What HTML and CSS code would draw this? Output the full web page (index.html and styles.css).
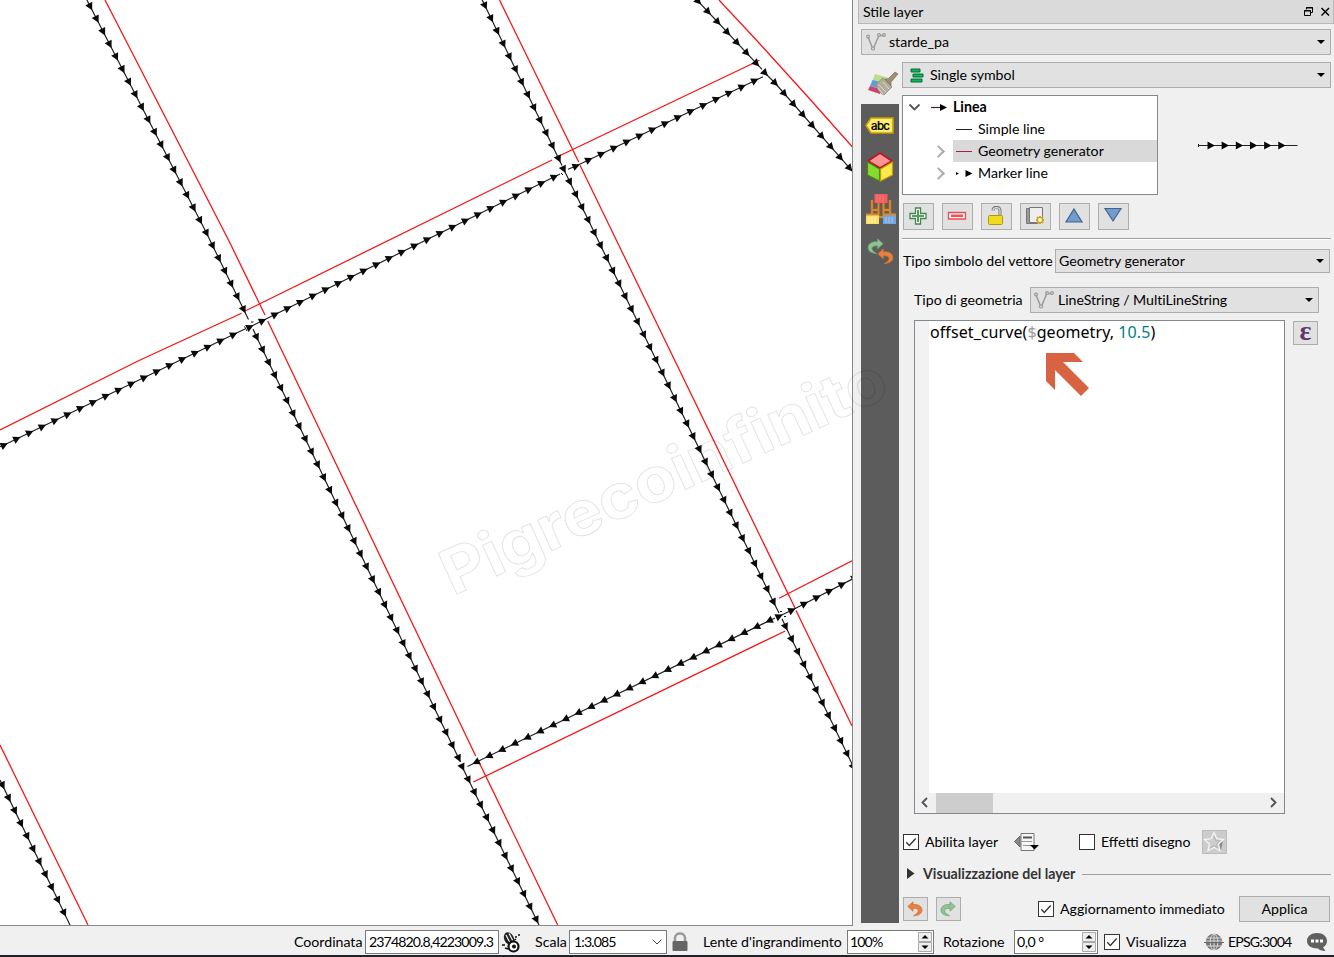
FILE: index.html
```html
<!DOCTYPE html>
<html lang="it">
<head>
<meta charset="utf-8">
<title>Stile layer</title>
<link rel="stylesheet" href="styles.css">
</head>
<body>
<svg class="defs" width="0" height="0">
  <defs>
    <symbol id="vline" viewBox="0 0 20 18"><g fill="none" stroke="#999b96" stroke-width="1.5"><path d="M2 4 6.500 15M7.500 15 12.500 3.500M13 2.500H18"/><g fill="#e1e1e1" stroke-width="1.2"><circle cx="2" cy="3.500" r="1.400"/><circle cx="7" cy="15.500" r="1.500"/><circle cx="13" cy="2" r="1.400"/><circle cx="18" cy="2" r="1.400"/></g></g></symbol>
    <symbol id="undo" viewBox="0 0 16 16"><path d="M.8 5.500 6 .8V3.500C11.500 3 15 5.500 15 9c0 3.500-3 5.500-8.500 5.800 3.500-2 4.800-3.300 4.800-5C11.300 8 9.500 7.200 6 7.400V10.200Z" fill="#e8803f" stroke="#cf6b2b" stroke-width=".7"/></symbol>
    <symbol id="redo" viewBox="0 0 16 16"><path d="M15.200 5.500 10 .8V3.500C4.500 3 1 5.500 1 9c0 3.500 3 5.500 8.500 5.800C6 12.800 4.700 11.500 4.700 9.800 4.700 8 6.500 7.200 10 7.400V10.200Z" fill="#8fc391" stroke="#68a06f" stroke-width=".7"/></symbol>
    <symbol id="check" viewBox="0 0 16 16"><rect x=".5" y=".5" width="15" height="15" fill="#fff" stroke="#333"/><path d="M3.300 8.300 6.300 11.500 12.700 4.500" fill="none" stroke="#333" stroke-width="1.300"/></symbol>
  </defs>
</svg>
<div class="window">
  <main class="workspace">
    <section class="map"><svg id="canvas" width="852" height="925" viewBox="0 0 852 925"></svg></section>
    <aside class="dock">
      <header class="dock-title"><span>Stile layer</span>
        <svg width="26" height="12" viewBox="0 0 26 12" fill="none" stroke="#000"><path d="M2.500 3.500V1.500H8.500V6.500H7M2 2H9M.5 4.500H6.500V9.500H.5ZM0 5H7"/><path d="M17.500 2 25 9.500M25 2 17.500 9.500" stroke-width="1.500"/></svg>
      </header>
      <div class="combo layer-combo"><svg width="20" height="18"><use href="#vline"/></svg><span>starde_pa</span><i class="caret"></i></div>
      <div class="dock-body">
        <nav class="tabs">
          <div class="tab-active"><svg width="32" height="28" viewBox="0 0 32 28"><path d="M8 4 22 8 20 15 5 12Z" fill="#bcdc90"/><path d="M5.500 10 17 13 16 19 3 16Z" fill="#5f9dd8"/><path d="M3 16 14 19 13 24 1 20Z" fill="#c9446f"/><path d="M9 14 16 8 25 17 17 25Q10 22 9 14Z" fill="#b3ae9b" stroke="#85826f" stroke-width=".7"/><path d="M12 15 19 22M16 12 22 19M11 18 16 24" stroke="#e1ddc7" stroke-width=".9"/><path d="M18 9 21 9 28 2 31 4 24 12 24 16Z" fill="#a08d72" stroke="#7d705c" stroke-width=".7"/></svg></div>
          <div class="tab-list">
            <svg width="30" height="17" viewBox="0 0 30 17"><path d="M1 8.500 6 1H28V16H6Z" fill="#fcee71" stroke="#c8a000" stroke-width="1.600"/><text x="6" y="12.500" class="abc" textLength="19">abc</text></svg>
            <svg width="30" height="32" viewBox="0 0 30 32"><path d="M15 2 27 10 15 17 3 10Z" fill="#f99494" stroke="#b51822" stroke-width="1.700"/><path d="M2.500 11 14.500 18V30L2.500 24Z" fill="#85dc30" stroke="#498a0d" stroke-width="1.200"/><path d="M27.500 11 15.500 18V30L27.500 24Z" fill="#ffe94c" stroke="#c39c00" stroke-width="1.200"/></svg>
            <svg width="32" height="32" viewBox="0 0 32 32"><path d="M13.500 9V24H18.500V9M7 7V22M25 7V22M7 17H14M18 17H25" fill="none" stroke="#9a5e1e" stroke-width="3.500"/><path d="M13.500 9V24H18.500V9M7 7V22M25 7V22M7 17H14M18 17H25" fill="none" stroke="#cb8b40" stroke-width="1.800"/><path d="M9.500 1H22.500V10H9.500Z" fill="#f25d62"/><path d="M12 2V9M15 2V9M18 2V9" stroke="#ff8585" stroke-width=".7"/><path d="M1 22H14V31H1Z" fill="#f8e16b"/><path d="M4 24V30M7 24V30M10 24V30" stroke="#fff5b3"/><path d="M18 22H31V31H18Z" fill="#75a7df"/><path d="M1 21.500H14M18 21.500H31" stroke="#d58b35" stroke-width="2"/><path d="M21 24V30M24 24V30M27 24V30" stroke="#a5c9f2"/></svg>
            <svg width="30" height="28" viewBox="0 0 30 28"><use href="#redo" x="1" y="0" width="17" height="17"/><use href="#undo" x="11" y="10" width="17" height="17"/></svg>
          </div>
        </nav>
        <div class="props">
          <div class="combo"><svg width="14" height="15" viewBox="0 0 14 15"><path d="M1 1H10V4H1ZM3 6H13V9H3ZM1 11H12V14H1Z" fill="#09b75d" stroke="#096a3b"/></svg><span>Single symbol</span><i class="caret"></i></div>
          <div class="tree-row">
            <div class="tree">
              <div class="node root"><svg width="50" height="22" viewBox="0 0 50 22"><path d="M6.500 8.500 11.500 13.500 16.500 8.500" fill="none" stroke="#555" stroke-width="1.800"/><path d="M28 11.500H40" stroke="#422" stroke-width="1.200"/><path d="M37 8 44 11.500 37 15Z"/></svg><b>Linea</b></div>
              <div class="node"><svg width="25" height="22"><path d="M3 11.500H19" stroke="#222"/></svg><span>Simple line</span></div>
              <div class="node selected"><svg width="25" height="22"><path d="M3 11.500H19" stroke="#a02444"/></svg><span>Geometry generator</span></div>
              <div class="node"><svg width="25" height="22"><path d="M12.500 8 19.500 11.500 12.500 15ZM3 10 6 11.500 3 13Z"/></svg><span>Marker line</span></div>
            </div>
            <svg id="preview" class="preview" width="104" height="12" viewBox="0 0 104 12"></svg>
          </div>
          <div class="tools">
            <span class="btn"><svg width="20" height="20" viewBox="0 0 20 20"><path d="M7.500 2H12.500V7.500H18V12.500H12.500V18H7.500V12.500H2V7.500H7.500Z" fill="#fff" stroke="#43844b" stroke-width="1.300"/><path d="M10 4V16M4 10H16" stroke="#579b60" stroke-width="2"/></svg></span>
            <span class="btn"><svg width="20" height="20" viewBox="0 0 20 20"><path d="M1.500 6.500H18.500V13H1.500Z" fill="#fff" stroke="#ee4b50" stroke-width="1.300"/><path d="M4 9.800H16" stroke="#f44f54" stroke-width="2.600"/></svg></span>
            <span class="btn"><svg width="20" height="20" viewBox="0 0 20 20"><path d="M7 4.500C7 0 14 0 14 5V9" fill="none" stroke="#777" stroke-width="3"/><path d="M7 4.500C7 1 14 0 14 5V9" fill="none" stroke="#ddd" stroke-width="1.200"/><rect x="2.500" y="9.500" width="14" height="9" rx="1" fill="#f0dc1e" stroke="#b59808"/></svg></span>
            <span class="btn"><svg width="20" height="20" viewBox="0 0 20 20"><path d="M1.500 2.500H13V17.500H1.500Z" fill="#999" stroke="#777"/><path d="M4.500 1.500H17.500V16.500H4.500Z" fill="#eee" stroke="#777"/><path d="M15 10V18M11 14H19M12 11 18 17M18 11 12 17" stroke="#c9a22c" stroke-width="2"/><circle cx="15" cy="14" r="2" fill="#fff4b1"/></svg></span>
            <span class="btn"><svg width="20" height="20" viewBox="0 0 20 20"><path d="M10 3 18 16H2Z" fill="#729cce" stroke="#3f658d" stroke-width="1.200"/></svg></span>
            <span class="btn"><svg width="20" height="20" viewBox="0 0 20 20"><path d="M10 15 18 2.500H2Z" fill="#729cce" stroke="#3f658d" stroke-width="1.200"/></svg></span>
          </div>
          <div class="rule"></div>
          <div class="field type-field"><label>Tipo simbolo del vettore</label><div class="combo"><span>Geometry generator</span><i class="caret"></i></div></div>
          <div class="field geometry-field"><label>Tipo di geometria</label><div class="combo"><svg width="20" height="18"><use href="#vline"/></svg><span>LineString / MultiLineString</span><i class="caret"></i></div></div>
          <div class="editor-row">
            <div class="editor">
              <div class="code"><pre>offset_curve(<span class="dollar">$</span>geometry, <span class="num">10.5</span>)</pre>
                <svg class="pointer" width="44" height="44" viewBox="0 0 44 44"><path d="M0 0H28L37 9H17L43 35 35 43 9 17V37L0 28Z" fill="#d96243"/></svg></div>
              <div class="scroll"><svg width="20" height="20" viewBox="0 0 20 20"><path d="M12 5 7.500 9.500 12 14" fill="none" stroke="#555" stroke-width="1.900"/></svg><i class="thumb"></i><svg class="right" width="20" height="20" viewBox="0 0 20 20"><path d="M7 5 11.500 9.500 7 14" fill="none" stroke="#555" stroke-width="1.900"/></svg></div>
            </div>
            <span class="btn expr">ε</span>
          </div>
          <div class="enable-row">
            <svg width="16" height="16"><use href="#check"/></svg><label class="w-enable">Abilita layer</label>
            <svg class="override" width="26" height="20" viewBox="0 0 26 20"><path d="M7 1.500H20V18.500H7Z" fill="#f6f6f6" stroke="#777"/><path d="M6 4V15L.5 9.500Z" fill="#888" stroke="#666"/><path d="M9 5.500H18" stroke="#555" stroke-width="2"/><path d="M6 9.500H18M9 13.500H18" stroke="#999"/><path d="M16 13H25L20.500 17.500Z"/></svg>
            <svg class="fx" width="16" height="16"><rect x=".5" y=".5" width="15" height="15" fill="#fff" stroke="#333"/></svg><label class="w-fx">Effetti disegno</label>
            <span class="star"><svg width="23" height="22" viewBox="0 0 23 22"><path d="M15 12 20 10 18 19 12 18Z" fill="#8a8a8a"/><path d="M11 1.500 13.800 7.700 20.500 8.500 15.500 13 17 19.800 11 16.400 5 19.800 6.500 13 1.500 8.500 8.200 7.700Z" fill="#ccc" stroke="#f4f4f4" stroke-width="1.300"/><path d="M11 5 12.500 9.500 17 10 13.500 13 14.500 17 11 14.500 7.500 17" fill="none" stroke="#b4b4b4"/></svg></span>
          </div>
          <div class="group-row"><svg width="8" height="12"><path d="M0 0 7.500 5.500 0 11Z" fill="#333"/></svg><b>Visualizzazione del layer</b><i></i></div>
          <div class="apply-row">
            <span class="btn small"><svg width="16" height="16"><use href="#undo"/></svg></span><span class="btn small"><svg width="16" height="16"><use href="#redo"/></svg></span>
            <svg class="live" width="16" height="16"><use href="#check"/></svg><label>Aggiornamento immediato</label><span class="btn apply">Applica</span>
          </div>
        </div>
      </div>
    </aside>
  </main>
  <footer class="status">
    <label class="s-coord">Coordinata</label><span class="input i-coord">2374820.8,4223009.3</span>
    <svg class="mouse" width="22" height="21" viewBox="0 0 22 21"><ellipse cx="7" cy="6.500" rx="4.800" ry="6.500" transform="rotate(-25 7 6.500)" fill="#222"/><path d="M4 3 8 11M7 1.500 11 9" stroke="#eee" stroke-width="1.300"/><circle cx="11.500" cy="14.500" r="5" fill="#fff" stroke="#111" stroke-width="2.200"/><circle cx="12" cy="14.500" r="2" fill="#111"/><path d="M4 9 8 11 14 7M13 5H15M16 3H18M0 13H3M3 16 6 17" fill="none" stroke="#111" stroke-width="1.500"/></svg>
    <label class="s-scale">Scala</label><span class="input i-scale">1:3.085<svg width="10" height="6" viewBox="0 0 10 6"><path d="M.7.7 5 5 9.300.7" fill="none" stroke="#444"/></svg></span>
    <svg class="lock" width="16" height="20" viewBox="0 0 16 20"><path d="M3 10V6C3 0 13 0 13 6V10" fill="none" stroke="#999" stroke-width="2.500"/><rect x=".5" y="9" width="15" height="10" rx="1" fill="#666"/></svg>
    <label class="s-zoom">Lente d'ingrandimento</label><span class="input spin i-zoom">100%<svg width="15" height="20" viewBox="0 0 15 20"><path d="M.5.500H13.500V9.500H.5ZM.5 10.500H13.500V19.500H.5Z" fill="#eee" stroke="#aaa"/><path d="M3.500 6.500 7 3 10.500 6.500ZM3.500 13.500 7 17 10.500 13.500Z"/></svg></span>
    <label class="s-rot">Rotazione</label><span class="input spin i-rot">0,0 °<svg width="15" height="20" viewBox="0 0 15 20"><path d="M.5.500H13.500V9.500H.5ZM.5 10.500H13.500V19.500H.5Z" fill="#eee" stroke="#aaa"/><path d="M3.500 6.500 7 3 10.500 6.500ZM3.500 13.500 7 17 10.500 13.500Z"/></svg></span>
    <svg class="render" width="16" height="16"><use href="#check"/></svg><label class="s-render">Visualizza</label>
    <svg class="globe" width="20" height="18" viewBox="0 0 20 18"><circle cx="10" cy="9" r="8.300" fill="#747474"/><g fill="none" stroke="#e4e4e4" stroke-width=".9"><ellipse cx="10" cy="9" rx="3.800" ry="8"/><path d="M10 1V17M3 5H17M1 8H19M3 13H17"/></g><path d="M0 9.500H20" stroke="#686868"/></svg>
    <label class="s-epsg">EPSG:3004</label>
    <svg class="bubble" width="21" height="19" viewBox="0 0 21 19"><path d="M10 0C16 0 20 3.300 20 8c0 3-1.500 5-4 6.200L18.500 18C15 18 12 17 11 15.500 4 15.500 0 12.500 0 8S4 0 10 0Z" fill="#606060"/><path d="M4 6.500H7V9.500H4ZM8.500 6.500H11.500V9.500H8.500ZM13 6.500H16V9.500H13Z" fill="#fff"/></svg>
  </footer>
  <svg class="watermark" width="540" height="330" viewBox="400 320 540 330"><text transform="translate(453 596) rotate(-24.600)" textLength="483" lengthAdjust="spacingAndGlyphs">Pigrecoinfinito</text></svg>
</div>
<script src="map.js"></script>
</body>
</html>
```
FILE: styles.css
```css
* { box-sizing: border-box; }
body { margin: 0; background: #f0f0f0; font: 14.15px/18px Lato, "Liberation Sans", sans-serif; color: #000; overflow: hidden; }
svg { display: block; flex: none; }
.defs { position: absolute; }
.window { position: relative; width: 1334px; height: 957px; display: flex; flex-direction: column; border-bottom: 2px solid #202228; }
.workspace { display: flex; height: 926px; }
.map { width: 853px; height: 926px; background: #fff; border-right: 1px solid #828790; border-bottom: 1px solid #828790; overflow: hidden; flex: none; }
.dock { width: 476px; margin-left: 5px; }
label, span, b { white-space: nowrap; }
.dock-title { height: 24px; background: #dadada; border: 1px solid #b9b9b9; border-top: 0; display: flex; justify-content: space-between; align-items: center; padding: 1px 3px 0 4px; }
.combo { height: 26px; border: 1px solid #adadad; background: #e1e1e1; display: flex; align-items: center; padding: 0 5px 0 3px; }
.combo svg { margin-right: 4px; }
.caret { margin-left: auto; width: 0; height: 0; border: 4px solid transparent; border-top-color: #000; border-bottom: 0; }
.layer-combo { margin: 5px 3px 0; padding-left: 4px; }
.layer-combo svg { margin-right: 3px; }
.dock-body { display: flex; padding-left: 3px; margin-top: 7px; }
.tabs { width: 38px; }
.tab-active { height: 42px; padding: 8px 0 0 6px; }
.tab-list { height: 819px; background: #5c5c5c; padding: 13px 0 0 4px; display: flex; flex-direction: column; align-items: flex-start; }
.tab-list svg:nth-child(2) { margin-top: 17px; }
.tab-list svg:nth-child(3) { margin-top: 10px; }
.tab-list svg:nth-child(4) { margin-top: 13px; margin-left: 1px; }
.abc { font: 500 11.500px Inter, sans-serif; stroke: #000; stroke-width: .2; }
.props { width: 429px; margin-left: 3px; }
.props > .combo { padding-left: 7px; }
.props > .combo svg { margin-right: 6px; }
.tree-row { display: flex; margin-top: 7px; }
.tree { width: 256px; height: 100px; border: 1px solid #828790; background: #fff; }
.node { height: 22px; display: flex; align-items: center; margin-left: 50px; position: relative; }
.node.root { margin-left: 0; }
.node.selected { background: #d9d9d9; }
.node:nth-child(n+3)::before { content: ""; position: absolute; left: -19px; top: 7px; width: 7px; height: 7px; border: solid #aaa; border-width: 2px 2px 0 0; transform: rotate(45deg); }
.preview { margin: 44px 0 0 38px; }
.tools { display: flex; gap: 8px; margin: 8px 0 0 1px; }
.btn { width: 31px; height: 27px; border: 1px solid #adadad; background: #e1e1e1; display: flex; align-items: center; justify-content: center; }
.tools .btn { padding: 0 1px 1px 0; }
.rule { margin-top: 8px; border-top: 1px solid #a0a0a0; border-bottom: 1px solid #fff; }
.field { display: flex; align-items: center; }
.type-field { margin-top: 9px; padding-left: 1px; }
.type-field label { width: 152px; }
.type-field .combo { width: 275px; height: 24px; }
.geometry-field { margin-top: 14px; padding-left: 12px; }
.geometry-field label { width: 116px; }
.geometry-field .combo { width: 289px; letter-spacing: -.04px; }
.editor-row { display: flex; margin: 7px 0 0 12px; }
.editor { width: 371px; height: 494px; border: 1px solid #828790; background: #fff; }
.code { height: 472px; border-left: 14px solid #f2f2f2; padding: 1px; position: relative; }
.code pre { margin: 0; font: 16px/21px "Noto Sans", sans-serif; letter-spacing: .08px; }
.dollar { color: #999; }
.num { color: #008080; }
.pointer { position: absolute; left: 117px; top: 32px; }
.scroll { height: 20px; background: #f0f0f0; display: flex; align-items: center; }
.thumb { width: 57px; height: 20px; background: #cdcdcd; margin-left: 1px; }
.right { margin-left: auto; }
.expr { width: 25px; height: 24px; margin: 1px 0 0 8px; font: bold 28px/20px "Liberation Serif", serif; color: #60376b; padding-bottom: 5px; }
.enable-row { display: flex; align-items: center; height: 24px; margin: 16px 0 0 1px; }
.enable-row label { margin-left: 6px; }
.w-enable { width: 76px; }
.override { margin-left: 13px; }
.fx { margin-left: 39px; }
.w-fx { width: 90px; }
.star { width: 25px; height: 24px; border: 1px solid #bcbcbc; background: #ccc; margin-left: 11px; }
.group-row { display: flex; align-items: center; height: 20px; margin-top: 10px; padding-left: 5px; color: #333; }
.group-row b { width: 153px; margin-left: 8px; }
.group-row i { height: 1px; background: #a0a0a0; margin-left: 6px; flex: 1; }
.apply-row { display: flex; align-items: center; height: 26px; margin: 12px 0 0 1px; }
.btn.small { width: 25px; height: 24px; margin-right: 8px; padding-right: 1px; }
.live { margin-left: 69px; }
.apply-row label { width: 167px; margin-left: 6px; }
.btn.apply { width: 91px; height: 26px; margin-left: 12px; }
.status { height: 29px; display: flex; align-items: center; padding: 3px 0 0 294px; }
.input { height: 24px; border: 1px solid #7a7a7a; background: #fff; display: flex; align-items: center; justify-content: space-between; padding: 0 4px 0 3px; letter-spacing: -.9px; }
.spin { padding: 0 0 0 2px; }
.s-coord { width: 71px; }
.i-coord { width: 134px; }
.mouse { margin: 0 11px 0 3px; }
.s-scale { width: 34px; }
.i-scale { width: 98px; padding-left: 4px; }
.lock { margin: 0 15px 0 5px; }
.s-zoom { width: 144px; }
.i-zoom { width: 87px; }
.s-rot { width: 71px; margin-left: 9px; }
.i-rot { width: 84px; letter-spacing: -.5px; }
.render { margin: 0 6px; }
.s-render { width: 78px; }
.globe { margin-right: 4px; }
.s-epsg { width: 79px; letter-spacing: -.85px; }
.watermark { position: absolute; left: 400px; top: 320px; pointer-events: none; }
.watermark text { font: bold 62px Inter, sans-serif; fill: none; stroke: #000; stroke-opacity: .11; stroke-width: 1; }
```
FILE: map.js
```js
const NS = 'http://www.w3.org/2000/svg';
const STEP = 14.15;

function add(parent, tag, attrs) {
  const el = document.createElementNS(NS, tag);
  for (const k in attrs) el.setAttribute(k, attrs[k]);
  parent.appendChild(el);
}

// Draws a street: black polyline with arrow markers, the first at distance `first`.
function street(parent, pts, first) {
  add(parent, 'polyline', { points: pts.join(' '), fill: 'none', stroke: '#222', 'stroke-width': 1.2 });
  let next = first;
  for (let i = 1; i < pts.length; i++) {
    const [x0, y0] = pts[i - 1], [x1, y1] = pts[i];
    const len = Math.hypot(x1 - x0, y1 - y0);
    const angle = Math.atan2(y1 - y0, x1 - x0) * 180 / Math.PI;
    while (next <= len + 0.01) {
      const x = x0 + (x1 - x0) * next / len, y = y0 + (y1 - y0) * next / len;
      add(parent, 'path', { d: 'M-3.2 -3.9 4.2 0 -3.2 3.9Z', fill: '#0a0a0a', transform: `translate(${x} ${y}) rotate(${angle})` });
      next += STEP;
    }
    next -= len;
  }
}

const canvas = document.getElementById('canvas');
const offsets = [
  [[105, 0], [229, 241], [265, 315]], [[267.7, 321], [475.7, 756]], [[478.3, 760.7], [557.7, 925]],
  [[0, 430], [138, 361], [241.5, 313.3]], [[245, 311], [552, 160]], [[557, 157], [759.5, 60.3]],
  [[499.500, 0], [578.7, 162]], [[580, 165.3], [795, 608]], [[796, 610.5], [852, 726]],
  [[779, 598.3], [852, 560.7]], [[785.3, 631], [473.3, 782]],
  [[719, 0], [756.3, 40], [808, 97], [852.5, 147]], [[0, 745], [88, 925]]
];
for (const pts of offsets) add(canvas, 'polyline', { points: pts.join(' '), fill: 'none', stroke: '#fb1010', 'stroke-width': 1.25 });

const streets = [
  [[[86.9, 0], [206.5, 233], [248.5, 319.500]], 7.3],
  [[[253, 329], [256.7, 337.3], [434, 707.3], [460.5, 762]], 9],
  [[[462.3, 767], [539, 925]], 0],
  [[[0, 446.8], [4, 445], [234, 334.3], [245, 329]], 4.4],
  [[[247, 328], [249.7, 327], [560, 174]], 2.9],
  [[[568, 169.3], [576, 166], [763, 76.7]], 8.600],
  [[[482.2, 0], [562, 165.500]], 6.4],
  [[[563.7, 169.3], [774, 603], [779, 613]], 0],
  [[[782, 618.7], [785.7, 626.7], [855, 770]], 8.8],
  [[[779, 616.3], [792.3, 610], [855, 577.7]], 0],
  [[[775, 618], [769.3, 620.7], [476, 762.3], [467.500, 766.500]], 6.3],
  [[[697, 0], [762, 69.4]], 1.9],
  [[[765, 73], [775, 83], [853, 172]], 0],
  [[[0, 780], [70, 925]], 6]
];
for (const [pts, first] of streets) street(canvas, pts, first);
add(canvas, 'path', { d: 'M244.500 326.500 247 331M251 322H253.500M561 173 563 175M780 611.500H782M784 616.500H786', stroke: '#111', fill: 'none' });

const preview = document.getElementById('preview');
for (let i = 0; i < 6; i++) add(preview, 'circle', { cx: 15 + i * 14.15, cy: 6.500, r: 5, fill: '#fafafa' });
add(preview, 'path', { d: 'M2.500 5V8', stroke: '#111' });
street(preview, [[2, 6.5], [101.500, 6.5]], 12.7);
preview.lastElementChild.remove();
```
